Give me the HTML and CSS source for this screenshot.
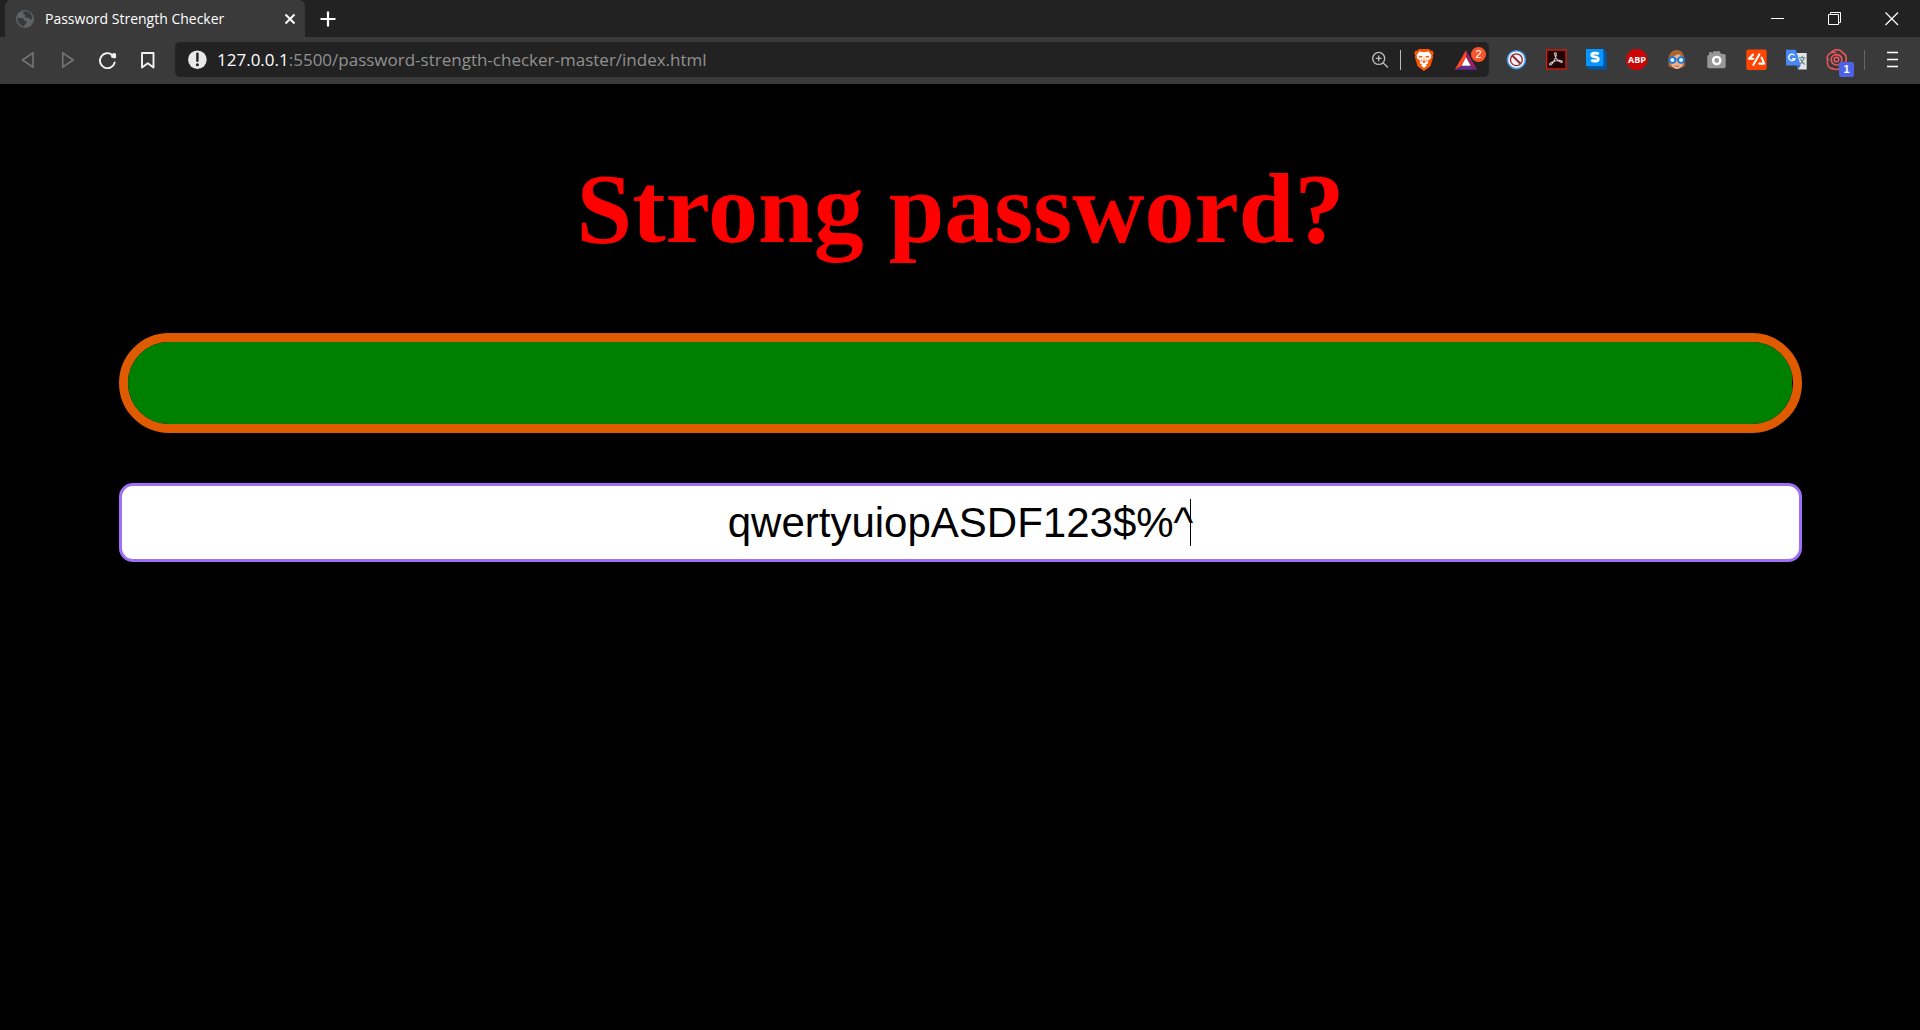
FILE: index.html
```html
<!DOCTYPE html>
<html lang="en">
<head>
<meta charset="utf-8">
<title>Password Strength Checker</title>
<link rel="stylesheet" href="styles.css">
</head>
<body>
<header class="browser">
  <div class="titlebar">
    <div class="tab">
      <svg class="favicon" width="20" height="20" viewBox="0 0 20 20"><circle cx="10" cy="10" r="9" fill="#5f6368"/><path d="M2.5 9c2 .2 3.800-.2 5.500.6 1.500.8.5 2 2 2.200 1.500.2 2.200 1 1.200 2.400-.8 1-1.800 1.800-2.200 3.300C5.500 17 2.300 13.500 2.500 9zM8 3c1.800-1 5-1 7 1.200 1.600 1.600 2.500 4 2.300 5.800-1.200 1.300-2.500.3-3.300-.7-.8-.9-2.600-.2-3.800-1-1-.8.4-1.700-.3-2.500C9.300 5 7.500 4.500 8 3z" fill="#3a3a3a"/></svg>
      <span class="tab-title">Password Strength Checker</span>
      <button class="tab-close" aria-label="Close tab"><svg width="20" height="20" viewBox="0 0 20 20"><path d="M5.500 5.500l9 9M14.500 5.500l-9 9" stroke="#fff" stroke-width="2"/></svg></button>
    </div>
    <button class="new-tab" aria-label="New tab"><svg width="20" height="20" viewBox="0 0 20 20"><path d="M10 2.500v15M2.500 10h15" stroke="#fff" stroke-width="2.200"/></svg></button>
    <div class="window-controls">
      <button aria-label="Minimize"><svg width="14" height="14" viewBox="0 0 14 14"><path d="M0 6.500h13" stroke="#fff"/></svg></button>
      <button aria-label="Restore"><svg width="14" height="14" viewBox="0 0 14 14"><path d="M.5 2.500h10v10H.500zM2.500 2.500v-2h10v10h-2" fill="none" stroke="#fff"/></svg></button>
      <button aria-label="Close window"><svg width="14" height="14" viewBox="0 0 14 14"><path d="M.5.500l12.500 12.500M13 .500L.500 13" stroke="#fff" stroke-width="1.200"/></svg></button>
    </div>
  </div>
  <nav class="toolbar" aria-label="Browser toolbar">
    <button aria-label="Back"><svg viewBox="0 0 40 35"><path d="M14.500 18L25 10.800v14.400z" fill="none" stroke="#767676" stroke-width="1.600" stroke-linejoin="round"/></svg></button>
    <button aria-label="Forward"><svg viewBox="0 0 40 35"><path d="M25.200 18l-10.500-7.200v14.400z" fill="none" stroke="#767676" stroke-width="1.600" stroke-linejoin="round"/></svg></button>
    <button aria-label="Reload"><svg viewBox="0 0 40 35"><path d="M26.700 20.500a7.500 7.500 0 1 1-2.400-7.600" fill="none" stroke="#f2f2f2" stroke-width="1.900" stroke-linecap="round"/><path d="M22.600 12.600l3.400-1.600 1.900.6.3 4-1.600.9-3.300-1z" fill="#f2f2f2"/></svg></button>
    <button aria-label="Bookmark"><svg viewBox="0 0 40 35"><path d="M14 11h11.500v14.500l-5.700-4.200-5.800 4.200z" fill="none" stroke="#f2f2f2" stroke-width="1.900" stroke-linejoin="round"/></svg></button>
    <div class="address">
      <button aria-label="Site information"><svg viewBox="0 0 40 35"><circle cx="20.400" cy="17.700" r="9.300" fill="#e8e8e8"/><path d="M20.400 11.800v7" stroke="#222" stroke-width="2.400" stroke-linecap="round"/><circle cx="20.400" cy="22.800" r="1.500" fill="#222"/></svg></button>
      <a class="url" href="#"><span class="host">127.0.0.1</span>:5500/password-strength-checker-master/index.html</a>
      <button aria-label="Zoom"><svg viewBox="0 0 40 35"><g fill="none" stroke="#bbb" stroke-width="1.400"><circle cx="18.700" cy="16.400" r="6"/><path d="M23 20.800l5 4.800M18.700 13.500v5.800M15.800 16.400h5.800"/></g></svg></button>
      <span class="divider"></span>
      <button aria-label="Brave Shields"><svg viewBox="0 0 40 35"><path d="M15 7h10l1.700 1.800 1.800-.2 1.200 2.700-.9 2 .4 1.700-2.800 9.200-6.400 4.800-6.400-4.800L10.800 15l.4-1.700-.9-2 1.200-2.700 1.800.2z" fill="#fb5607"/><path d="M15.500 9.500l4.500.8 4.500-.8 2.800 3.500-.4 3-3.300 3.100.6 2.200-2.600 1.400 1.400.9-3 2.300-3-2.300 1.400-.9-2.600-1.400.6-2.200-3.300-3.100-.4-3z" fill="#fff"/><path d="M14.300 13.800l4.200.4-.3 1.500-2.500-.3zM25.700 13.800l-4.200.4.3 1.500 2.500-.3zM20 13.500l.5 5.200 1.700 1-2.200 1.200-2.200-1.200 1.700-1zM17.200 17l1.100 1-1.100 1.600zM22.800 17l-1.100 1 1.100 1.600z" fill="#fb5607"/></svg></button>
      <button class="rewards" aria-label="Brave Rewards"><svg viewBox="0 0 45 35"><path d="M22 8.300L10.700 27.700l7-4L22 15.300z" fill="#ff4724"/><path d="M22 8.300l11.300 19.400-6.600-4L22 15.300z" fill="#9e1f63"/><path d="M10.700 27.700h22.600l-6.600-4h-9z" fill="#662d91"/><path d="M22 15.300l4.700 8.400h-9z" fill="#fff"/></svg><span class="badge badge-round">2</span></button>
    </div>
    <div class="extensions">
      <button aria-label="Popup blocker"><svg viewBox="0 0 40 35"><circle cx="19.400" cy="17.700" r="9" fill="#f4f4f4" stroke="#3f97e8" stroke-width="1.500"/><circle cx="19.400" cy="17.700" r="5.900" fill="#f8eeee" stroke="#87283a" stroke-width="1.300"/><path d="M15.300 13.600l8.200 8.200" stroke="#87283a" stroke-width="2"/></svg></button>
      <button aria-label="PDF tools"><svg viewBox="0 0 40 35"><path d="M9.700 8h19.300v19H9.700z" fill="#210406" stroke="#c51e0b" stroke-width="1.400"/><path d="M18 10.800c2.300-.6 1.300 4-.7 7.500-1.300 2.500-3 5-4.200 4.700-2-.8 2.500-3.700 6.200-4.300 3-.6 6.200-.2 6 1.200-.3 1.500-3.800-.7-5.500-2.900-2-2.500-2.800-5.700-1.800-6.200z" fill="none" stroke="#d6cccc" stroke-width="1.100"/></svg></button>
      <button aria-label="Stylish"><svg viewBox="0 0 40 35"><path d="M26.300 7l3.400 3.500v17H12.500L9 24z" fill="#0057a6"/><path d="M9 7h17.300v17H9z" fill="#0796ff"/><path d="M21.700 12.200c-2-1.600-7-1.600-7 .8 0 2.800 6.600 1.100 6.600 4 0 2.700-5 2.400-7 .8" fill="none" stroke="#fff" stroke-width="2.800"/></svg></button>
      <button class="abp" aria-label="Adblock Plus"><svg viewBox="0 0 40 35"><path d="M15.400 7.200h8.600l6 6v8.600l-6 6h-8.600l-6-6v-8.600z" fill="#ce0505"/></svg><span class="abp-label">ABP</span></button>
      <button aria-label="Reading glasses"><svg viewBox="0 0 40 35"><path d="M11.300 24c.8-3-2-15 8-16 9.800 0 7.500 11 9 16l-3 1.500h-11z" fill="#a86532"/><path d="M13.500 16l8-4 5 4v5c-1 3.500-3.300 6-6.500 6s-5.500-2.500-6.500-6z" fill="#f0b28e"/><path d="M17.600 23.800q2.300 1.200 4.600 0" fill="none" stroke="#b65d4c"/><g fill="#e6f3ff" stroke="#1976d7" stroke-width="1.700"><circle cx="15.400" cy="18" r="2.900"/><circle cx="24" cy="18" r="2.900"/><path d="M18.300 17.500h2.800M11 16.800h1.800M26.600 16.800h1.800"/></g></svg></button>
      <button aria-label="Screenshot"><svg viewBox="0 0 40 35"><path d="M12 13v-2.700h3.300V12l1-2.700h6.500L24 12h3c1 0 1.700.8 1.700 1.800v10.800c0 1-.7 1.700-1.700 1.700H12c-1 0-1.700-.7-1.700-1.700v-10c0-1 .7-1.600 1.700-1.600z" fill="#989898"/><circle cx="19.700" cy="18.500" r="3.600" fill="#989898" stroke="#fff" stroke-width="2.400"/></svg></button>
      <button aria-label="Code tools"><svg viewBox="0 0 40 35"><rect x="9.300" y="7.500" width="20.400" height="20.400" rx="2" fill="#ff4500"/><path d="M16 12.500l-4 4.200h4.200M22.400 12.300l-6 10.500M24.600 15.600l2.600 6h-5" fill="none" stroke="#fff" stroke-width="2.100" stroke-linejoin="round" stroke-linecap="round"/></svg></button>
      <button aria-label="Translate"><svg viewBox="0 0 40 35"><path d="M17 11h12.700v16.500H21z" fill="#e2e4e5"/><path d="M22 15.800h6.500M25.200 14v2M27 16c-.5 3-2.500 5-5 6.500M23.500 17c1 2.500 2.500 4.500 4.500 5.500" fill="none" stroke="#607d83" stroke-width="1.100"/><path d="M20 23h3.700L21 27.500z" fill="#2f52c4"/><path d="M9 7.700h9.800L23.700 23.500H9z" fill="#4688f4"/><path d="M17.500 13.400a3.200 3.200 0 1 0 .4 3.200h-2.800" fill="none" stroke="#fff" stroke-width="1.400"/></svg></button>
      <button aria-label="Rose tools"><svg viewBox="0 0 40 35"><g fill="none" stroke="#f0565c" stroke-width="1.500" stroke-linecap="round"><circle cx="19.500" cy="17.500" r="2.300"/><path d="M14 11c3-4.500 9.500-4 12 0M26 11c4 2 4.500 8 1 11M27 22c-1.500 5-8 7-12 4M17 27c-6 0-8-6-6-10M10.500 18c-1.500-5 3.500-9 8-7.500M14.300 18c-.5-4.500 5-7 8.700-4M22 13c4 2 4 8-.5 9.700M22.500 22.300c-4 2-8.500-1-8.200-4.800"/></g></svg><span class="badge badge-square">1</span></button>
    </div>
    <span class="divider toolbar-divider"></span>
    <button aria-label="Menu"><svg viewBox="0 0 40 35"><path d="M15 10.500h11M15 17.500h11M15 24.500h11" stroke="#fff" stroke-width="1.300"/></svg></button>
  </nav>
</header>
<main class="page">
  <h1 class="heading">Strong password?</h1>
  <div class="meter"><div class="meter-fill"></div></div>
  <div class="field">
    <input class="password" type="text" aria-label="Password" value="qwertyuiopASDF123$%^">
    <span class="caret"></span>
  </div>
</main>
</body>
</html>
```
FILE: styles.css
```css
* { box-sizing: border-box; }

body {
  margin: 0;
  min-height: 100vh;
  background: #000;
}

button {
  display: flex;
  align-items: center;
  justify-content: center;
  padding: 0;
  border: 0;
  background: none;
  flex: none;
}

svg { display: block; flex: none; }

.browser {
  font-family: "Open Sans", "Noto Sans", sans-serif;
  color: #fff;
}

.titlebar {
  display: flex;
  height: 37px;
  padding-left: 5px;
  background: #222;
}

.tab {
  display: flex;
  align-items: center;
  width: 300px;
  padding: 0 5px 0 10px;
  border-radius: 6px 6px 0 0;
  background: #3a3a3a;
}

.tab-title {
  flex: 1;
  padding-left: 10px;
  font-size: 14px;
  line-height: 20px;
  white-space: nowrap;
}

.new-tab { width: 45px; }

.window-controls {
  display: flex;
  margin-left: auto;
}

.window-controls button { width: 57px; }

.toolbar {
  display: flex;
  height: 47px;
  padding: 5px 8px 7px;
  background: #3a3a3a;
}

.toolbar button { width: 40px; height: 35px; position: relative; }
.toolbar svg { width: 100%; height: 35px; }

.address {
  display: flex;
  flex: 1;
  align-items: center;
  min-width: 0;
  margin: 0 8px 0 7px;
  padding-left: 2px;
  border-radius: 5px;
  background: #222;
}

.url {
  flex: 1;
  overflow: hidden;
  color: #919191;
  font-size: 17px;
  line-height: 24px;
  text-decoration: none;
  white-space: nowrap;
}

.host { color: #fff; }

.divider {
  width: 1px;
  height: 20px;
  margin-right: 3px;
  background: #bbb;
}

.toolbar-divider {
  align-self: center;
  margin: 0 7px;
  background: #666;
}

.toolbar .rewards { width: 45px; }

.extensions { display: flex; }

.badge {
  position: absolute;
  width: 15px;
  height: 15px;
  color: #fff;
  font-size: 11px;
  line-height: 15px;
  text-align: center;
}

.badge-round {
  top: 5px;
  right: 3px;
  border-radius: 50%;
  background: #fb542b;
}

.badge-square {
  right: 3px;
  bottom: 0;
  border-radius: 2px;
  background: #4c63e8;
  font-weight: 600;
}

.abp-label {
  position: absolute;
  inset: 0;
  color: #fff;
  font-family: "Open Sans", sans-serif;
  font-size: 9px;
  font-weight: 700;
  line-height: 35px;
  text-align: center;
}

.page {
  padding: 67px 118px 0 119px;
}

.heading {
  margin: 0 0 66px;
  color: #f00;
  font: 700 100px/116px "Liberation Serif", "Times New Roman", serif;
  text-align: center;
}

.meter {
  height: 100px;
  margin-bottom: 50px;
  overflow: hidden;
  border: 9px solid #e05b00;
  border-radius: 50px;
}

.meter-fill {
  width: calc(100% - 1px);
  height: 100%;
  background: #008000;
}

.field { position: relative; }

.password {
  display: block;
  width: 100%;
  height: 79px;
  padding: 0 16px;
  border: 3px solid #9f6ff5;
  border-radius: 14px;
  outline: 0;
  background: #fff;
  color: #000;
  font: 42px/48px "Liberation Sans", Arial, sans-serif;
  text-align: center;
}

.caret {
  position: absolute;
  top: 16px;
  left: calc(50% + 229px);
  width: 1px;
  height: 47px;
  background: #000;
}
```
